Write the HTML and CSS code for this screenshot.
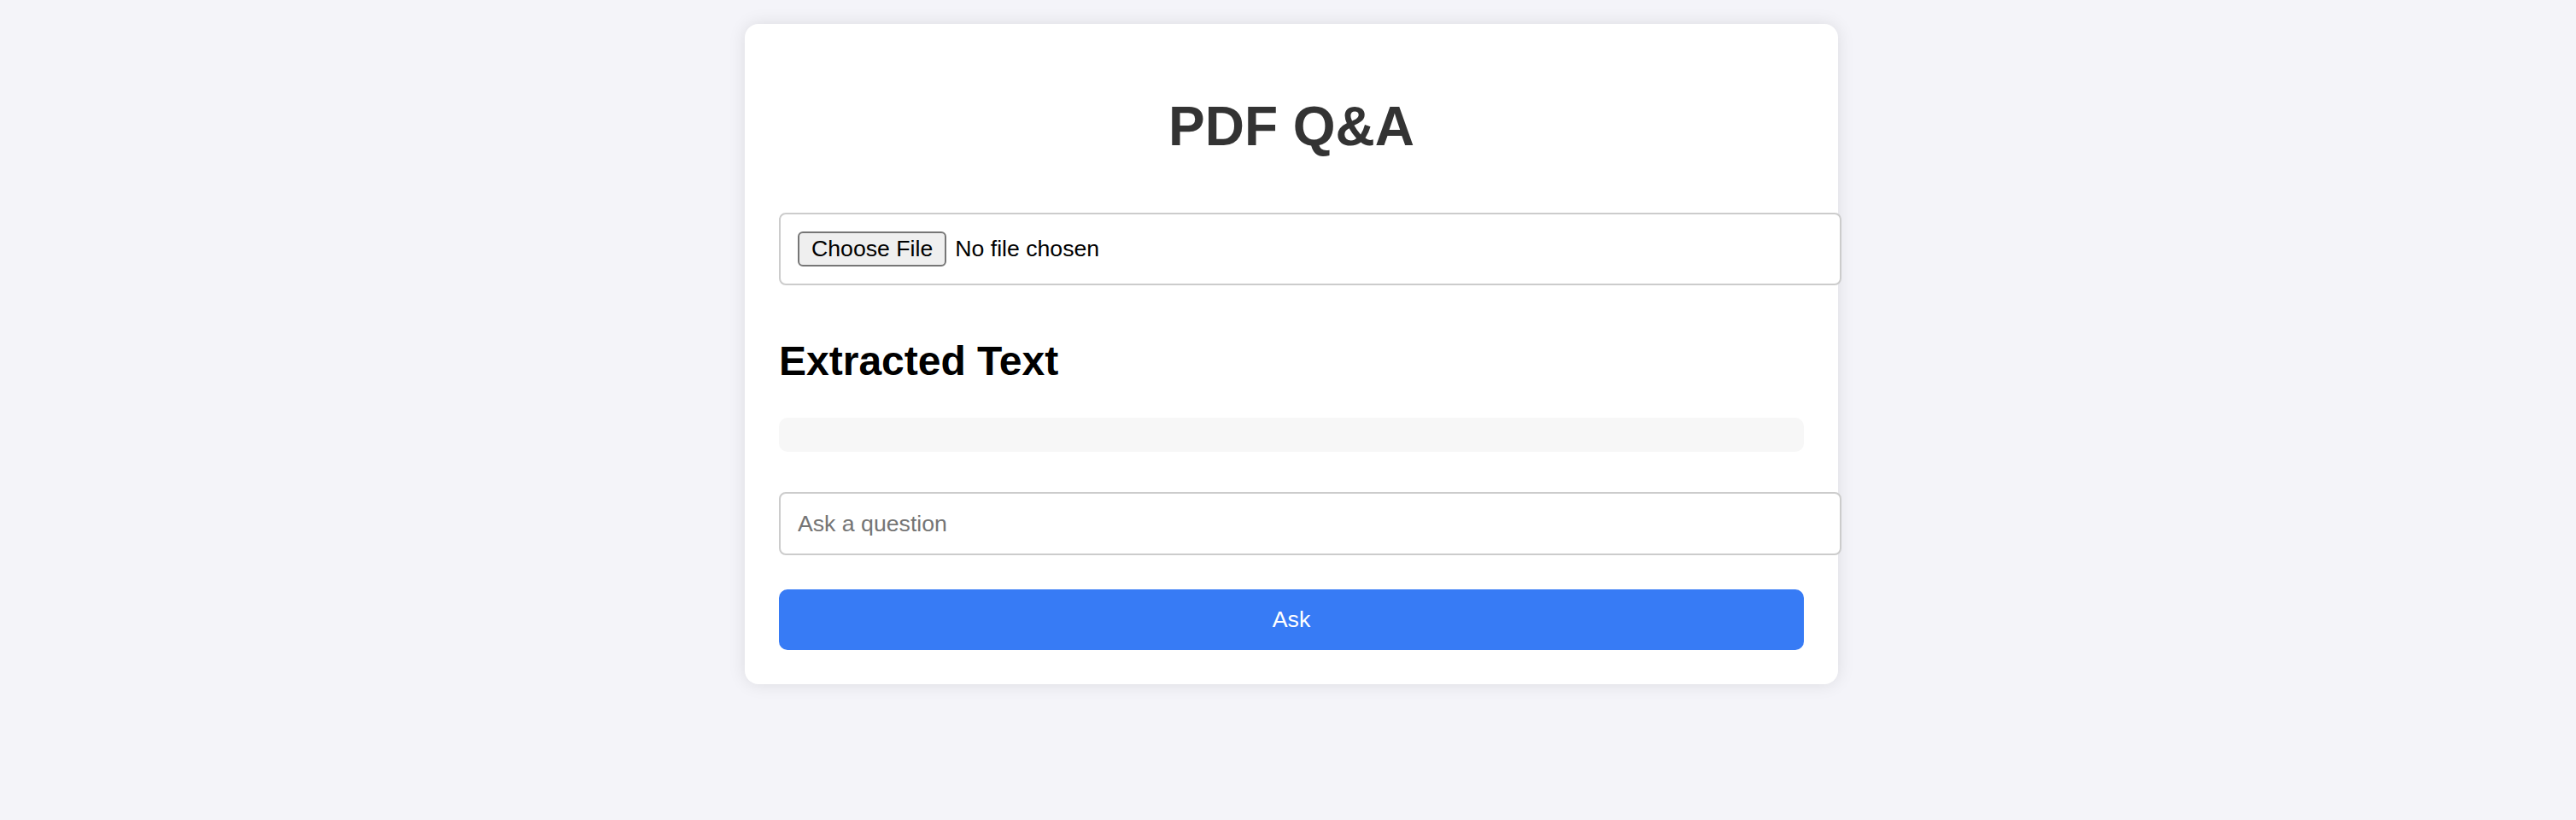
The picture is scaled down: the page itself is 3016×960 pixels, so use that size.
FILE: index.html
```html
<!DOCTYPE html>
<html lang="en">
<head>
<meta charset="utf-8">
<title>PDF Q&amp;A</title>
<link rel="stylesheet" href="styles.css">
</head>
<body>
<div class="page">
  <div class="card">
    <h1 class="title">PDF Q&amp;A</h1>
    <input type="file" class="file-input">
    <h2 class="section-title">Extracted Text</h2>
    <div class="extracted"></div>
    <input type="text" class="question" placeholder="Ask a question">
    <button class="ask">Ask</button>
  </div>
</div>
</body>
</html>
```

FILE: styles.css
```css
html, body {
  margin: 0;
  padding: 0;
  background: #f4f4f9;
  font-family: "Liberation Sans", Arial, sans-serif;
}

.page {
  display: flex;
  justify-content: center;
  align-items: flex-start;
  padding: 28px 0 0 8px;
  min-height: 932px;
}

.card {
  width: 1200px;
  padding: 40px;
  background: #ffffff;
  border-radius: 16px;
  box-shadow: 0 0 20px rgba(0, 0, 0, 0.1);
  display: flex;
  flex-direction: column;
  align-items: stretch;
}

.title {
  margin: 43px 0 0 0;
  font-size: 64px;
  font-weight: bold;
  line-height: normal;
  color: #333333;
  text-align: center;
}

.file-input {
  display: block;
  box-sizing: content-box;
  width: 1200px;
  height: 41px;
  margin: 64px 0 0 0;
  padding: 20px;
  border: 2px solid #cccccc;
  border-radius: 8px;
  font-family: "Liberation Sans", Arial, sans-serif;
  font-size: 26.67px;
  color: #000000;
  background: #ffffff;
}

.file-input::file-selector-button {
  font-family: "Liberation Sans", Arial, sans-serif;
  font-size: 26.67px;
  height: 41px;
  padding: 0 14px;
  margin: 0 10px 0 0;
  border: 2px solid #767676;
  border-radius: 6px;
  background: #efefef;
  color: #000000;
}

.section-title {
  margin: 61px 0 0 0;
  font-size: 48px;
  font-weight: bold;
  line-height: normal;
  color: #000000;
}

.extracted {
  margin-top: 39px;
  padding: 20px;
  background: #f7f7f7;
  border-radius: 10px;
}

.question {
  display: block;
  box-sizing: content-box;
  width: 1200px;
  height: 30px;
  margin: 47px 0 0 0;
  padding: 20px;
  border: 2px solid #cccccc;
  border-radius: 8px;
  font-family: "Liberation Sans", Arial, sans-serif;
  font-size: 26.67px;
  color: #000000;
  background: #ffffff;
  outline: none;
}

.question::placeholder {
  color: #757575;
}

.ask {
  display: block;
  width: 100%;
  margin: 40px 0 0 0;
  padding: 20px;
  border: none;
  border-radius: 10px;
  background: #377bf5;
  color: #ffffff;
  font-family: "Liberation Sans", Arial, sans-serif;
  font-size: 26.67px;
  line-height: 31px;
  cursor: pointer;
}
```
